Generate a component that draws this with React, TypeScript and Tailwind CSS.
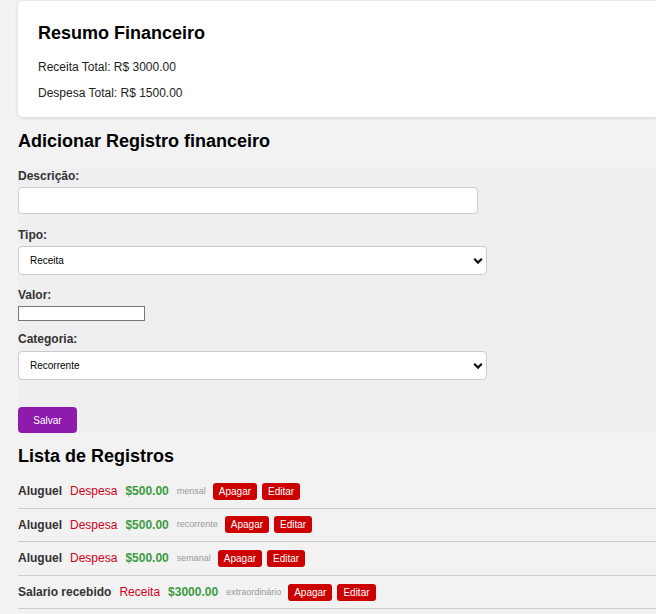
import React from "react";

function Chevron() {
  return (
    <svg
      className="pointer-events-none absolute right-[4px] top-1/2 -translate-y-1/2"
      width="10"
      height="7"
      viewBox="0 0 10 7"
    >
      <path d="M1.2 1.3 L5 5.1 L8.8 1.3" fill="none" stroke="#111" strokeWidth="2.2" />
    </svg>
  );
}

function Select({ value }: { value: string }) {
  return (
    <div className="relative w-[469px] h-[29px]">
      <select
        className="appearance-none w-full h-full bg-white border border-[#cccccc] rounded-[4px] pl-[11px] text-[10px] text-black outline-none"
        defaultValue={value}
      >
        <option>{value}</option>
      </select>
      <Chevron />
    </div>
  );
}

export default function App() {
  const rows = [
    { d: "Aluguel", t: "Despesa", v: "$500.00", c: "mensal" },
    { d: "Aluguel", t: "Despesa", v: "$500.00", c: "recorrente" },
    { d: "Aluguel", t: "Despesa", v: "$500.00", c: "semanal" },
    { d: "Salario recebido", t: "Receita", v: "$3000.00", c: "extraordinário" },
  ];
  return (
    <div className="min-h-screen bg-[#f2f2f2] pl-[18px] overflow-hidden font-['Liberation_Sans',Arial,sans-serif]">
      <div className="mt-px bg-white rounded-l-[5px] shadow-[0_1px_4px_rgba(0,0,0,0.12)] pl-5 pt-[22px] pb-[17px]">
        <h3 className="text-[18px] leading-[21px] font-bold text-black">Resumo Financeiro</h3>
        <p className="mt-[16px] text-[12px] leading-[14px] text-[#222]">Receita Total: R$ 3000.00</p>
        <p className="mt-[12px] text-[12px] leading-[14px] text-[#222]">Despesa Total: R$ 1500.00</p>
      </div>

      <h2 className="mt-[14px] text-[18px] leading-[21px] font-bold text-black">Adicionar Registro financeiro</h2>

      <div className="mt-[17px] bg-[#efeff1] flex flex-col items-start">
        <label className="text-[12px] leading-[14px] font-bold text-[#333]">Descrição:</label>
        <input className="mt-1 w-[460px] h-[27px] bg-white border border-[#cccccc] rounded-[4px] outline-none" />

        <label className="mt-[14px] text-[12px] leading-[14px] font-bold text-[#333]">Tipo:</label>
        <div className="mt-1">
          <Select value="Receita" />
        </div>

        <label className="mt-[13px] text-[12px] leading-[14px] font-bold text-[#333]">Valor:</label>
        <input className="mt-1 w-[127px] h-[15px] bg-white border border-[#767676] outline-none" />

        <label className="mt-[11px] text-[12px] leading-[14px] font-bold text-[#333]">Categoria:</label>
        <div className="mt-[5px]">
          <Select value="Recorrente" />
        </div>

        <button className="mt-[27px] w-[59px] h-[26px] bg-[#8e1bab] rounded-[4px] text-white text-[10px] flex items-center justify-center">
          Salvar
        </button>
      </div>

      <h2 className="mt-[13px] text-[18px] leading-[21px] font-bold text-black">Lista de Registros</h2>

      <div className="mt-[8px]">
        {rows.map((r, i) => (
          <div key={i} className="flex items-center py-[7.8px] border-b border-[#cccccc]">
            <span className="mr-[8px] text-[12px] leading-[14px] font-bold text-[#333]">{r.d}</span>
            <span className="mr-[8px] text-[12px] leading-[14px] text-[#d0021b]">{r.t}</span>
            <span className="mr-[8px] text-[12px] leading-[14px] font-bold text-[#3d9b40]">{r.v}</span>
            <span className="mr-[7px] text-[9px] leading-[11px] text-[#999]">{r.c}</span>
            <button className="mr-[5px] h-[17px] px-[6px] bg-[#cc0000] rounded-[3px] text-white text-[10px] flex items-center">
              Apagar
            </button>
            <button className="h-[17px] px-[6px] bg-[#cc0000] rounded-[3px] text-white text-[10px] flex items-center">
              Editar
            </button>
          </div>
        ))}
      </div>
    </div>
  );
}
